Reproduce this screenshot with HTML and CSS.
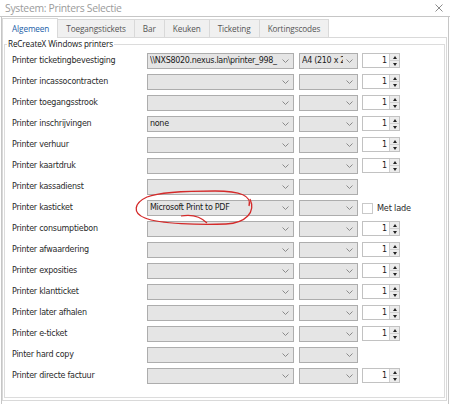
FILE: index.html
```html
<!DOCTYPE html>
<html>
<head>
<meta charset="utf-8">
<link rel="stylesheet" href="styles.css">
</head>
<body>
<div class="window">
  <div class="titlebar">
    <span class="title">Systeem: Printers Selectie</span>
    <svg class="close" width="8" height="8" viewBox="0 0 8 8"><path d="M0.5 0.5 L7.5 7.5 M7.5 0.5 L0.5 7.5" stroke="#8c8c8c" stroke-width="1" fill="none"/></svg>
  </div>
  <div class="client">
    <div class="tabs">
      <div class="tab active">Algemeen</div>
      <div class="tab">Toegangstickets</div>
      <div class="tab">Bar</div>
      <div class="tab">Keuken</div>
      <div class="tab">Ticketing</div>
      <div class="tab">Kortingscodes</div>
    </div>
    <div class="panel">
      <fieldset class="group">
        <legend>ReCreateX Windows printers</legend>
        <div class="rows">
          <div class="label">Printer ticketingbevestiging</div>
          <div class="combo"><span class="val">\\NXS8020.nexus.lan\printer_998_</span><svg class="chev" width="7" height="4" viewBox="0 0 7 4"><path d="M0.5 0.5 L3.5 3.5 L6.5 0.5" stroke="#8a8a8a" fill="none"/></svg></div>
          <div class="combo small"><span class="val">A4 (210 x 297 mm)</span><svg class="chev" width="7" height="4" viewBox="0 0 7 4"><path d="M0.5 0.5 L3.5 3.5 L6.5 0.5" stroke="#8a8a8a" fill="none"/></svg></div>
          <div class="spin"><span class="num">1</span><span class="btns"><span class="up"></span><span class="down"></span></span></div>

          <div class="label">Printer incassocontracten</div>
          <div class="combo"><span class="val"></span><svg class="chev" width="7" height="4" viewBox="0 0 7 4"><path d="M0.5 0.5 L3.5 3.5 L6.5 0.5" stroke="#8a8a8a" fill="none"/></svg></div>
          <div class="combo small"><span class="val"></span><svg class="chev" width="7" height="4" viewBox="0 0 7 4"><path d="M0.5 0.5 L3.5 3.5 L6.5 0.5" stroke="#8a8a8a" fill="none"/></svg></div>
          <div class="spin"><span class="num">1</span><span class="btns"><span class="up"></span><span class="down"></span></span></div>

          <div class="label">Printer toegangsstrook</div>
          <div class="combo"><span class="val"></span><svg class="chev" width="7" height="4" viewBox="0 0 7 4"><path d="M0.5 0.5 L3.5 3.5 L6.5 0.5" stroke="#8a8a8a" fill="none"/></svg></div>
          <div class="combo small"><span class="val"></span><svg class="chev" width="7" height="4" viewBox="0 0 7 4"><path d="M0.5 0.5 L3.5 3.5 L6.5 0.5" stroke="#8a8a8a" fill="none"/></svg></div>
          <div class="spin"><span class="num">1</span><span class="btns"><span class="up"></span><span class="down"></span></span></div>

          <div class="label">Printer inschrijvingen</div>
          <div class="combo"><span class="val">none</span><svg class="chev" width="7" height="4" viewBox="0 0 7 4"><path d="M0.5 0.5 L3.5 3.5 L6.5 0.5" stroke="#8a8a8a" fill="none"/></svg></div>
          <div class="combo small"><span class="val"></span><svg class="chev" width="7" height="4" viewBox="0 0 7 4"><path d="M0.5 0.5 L3.5 3.5 L6.5 0.5" stroke="#8a8a8a" fill="none"/></svg></div>
          <div class="spin"><span class="num">1</span><span class="btns"><span class="up"></span><span class="down"></span></span></div>

          <div class="label">Printer verhuur</div>
          <div class="combo"><span class="val"></span><svg class="chev" width="7" height="4" viewBox="0 0 7 4"><path d="M0.5 0.5 L3.5 3.5 L6.5 0.5" stroke="#8a8a8a" fill="none"/></svg></div>
          <div class="combo small"><span class="val"></span><svg class="chev" width="7" height="4" viewBox="0 0 7 4"><path d="M0.5 0.5 L3.5 3.5 L6.5 0.5" stroke="#8a8a8a" fill="none"/></svg></div>
          <div class="spin"><span class="num">1</span><span class="btns"><span class="up"></span><span class="down"></span></span></div>

          <div class="label">Printer kaartdruk</div>
          <div class="combo"><span class="val"></span><svg class="chev" width="7" height="4" viewBox="0 0 7 4"><path d="M0.5 0.5 L3.5 3.5 L6.5 0.5" stroke="#8a8a8a" fill="none"/></svg></div>
          <div class="combo small"><span class="val"></span><svg class="chev" width="7" height="4" viewBox="0 0 7 4"><path d="M0.5 0.5 L3.5 3.5 L6.5 0.5" stroke="#8a8a8a" fill="none"/></svg></div>
          <div class="spin"><span class="num">1</span><span class="btns"><span class="up"></span><span class="down"></span></span></div>

          <div class="label">Printer kassadienst</div>
          <div class="combo"><span class="val"></span><svg class="chev" width="7" height="4" viewBox="0 0 7 4"><path d="M0.5 0.5 L3.5 3.5 L6.5 0.5" stroke="#8a8a8a" fill="none"/></svg></div>
          <div class="combo small"><span class="val"></span><svg class="chev" width="7" height="4" viewBox="0 0 7 4"><path d="M0.5 0.5 L3.5 3.5 L6.5 0.5" stroke="#8a8a8a" fill="none"/></svg></div>
          <div class="empty"></div>

          <div class="label">Printer kasticket</div>
          <div class="combo"><span class="val">Microsoft Print to PDF</span><svg class="chev" width="7" height="4" viewBox="0 0 7 4"><path d="M0.5 0.5 L3.5 3.5 L6.5 0.5" stroke="#8a8a8a" fill="none"/></svg></div>
          <div class="combo small"><span class="val"></span><svg class="chev" width="7" height="4" viewBox="0 0 7 4"><path d="M0.5 0.5 L3.5 3.5 L6.5 0.5" stroke="#8a8a8a" fill="none"/></svg></div>
          <div class="check"><span class="box"></span><span class="cap">Met lade</span></div>

          <div class="label">Printer consumptiebon</div>
          <div class="combo"><span class="val"></span><svg class="chev" width="7" height="4" viewBox="0 0 7 4"><path d="M0.5 0.5 L3.5 3.5 L6.5 0.5" stroke="#8a8a8a" fill="none"/></svg></div>
          <div class="combo small"><span class="val"></span><svg class="chev" width="7" height="4" viewBox="0 0 7 4"><path d="M0.5 0.5 L3.5 3.5 L6.5 0.5" stroke="#8a8a8a" fill="none"/></svg></div>
          <div class="spin"><span class="num">1</span><span class="btns"><span class="up"></span><span class="down"></span></span></div>

          <div class="label">Printer afwaardering</div>
          <div class="combo"><span class="val"></span><svg class="chev" width="7" height="4" viewBox="0 0 7 4"><path d="M0.5 0.5 L3.5 3.5 L6.5 0.5" stroke="#8a8a8a" fill="none"/></svg></div>
          <div class="combo small"><span class="val"></span><svg class="chev" width="7" height="4" viewBox="0 0 7 4"><path d="M0.5 0.5 L3.5 3.5 L6.5 0.5" stroke="#8a8a8a" fill="none"/></svg></div>
          <div class="spin"><span class="num">1</span><span class="btns"><span class="up"></span><span class="down"></span></span></div>

          <div class="label">Printer exposities</div>
          <div class="combo"><span class="val"></span><svg class="chev" width="7" height="4" viewBox="0 0 7 4"><path d="M0.5 0.5 L3.5 3.5 L6.5 0.5" stroke="#8a8a8a" fill="none"/></svg></div>
          <div class="combo small"><span class="val"></span><svg class="chev" width="7" height="4" viewBox="0 0 7 4"><path d="M0.5 0.5 L3.5 3.5 L6.5 0.5" stroke="#8a8a8a" fill="none"/></svg></div>
          <div class="spin"><span class="num">1</span><span class="btns"><span class="up"></span><span class="down"></span></span></div>

          <div class="label">Printer klantticket</div>
          <div class="combo"><span class="val"></span><svg class="chev" width="7" height="4" viewBox="0 0 7 4"><path d="M0.5 0.5 L3.5 3.5 L6.5 0.5" stroke="#8a8a8a" fill="none"/></svg></div>
          <div class="combo small"><span class="val"></span><svg class="chev" width="7" height="4" viewBox="0 0 7 4"><path d="M0.5 0.5 L3.5 3.5 L6.5 0.5" stroke="#8a8a8a" fill="none"/></svg></div>
          <div class="spin"><span class="num">1</span><span class="btns"><span class="up"></span><span class="down"></span></span></div>

          <div class="label">Printer later afhalen</div>
          <div class="combo"><span class="val"></span><svg class="chev" width="7" height="4" viewBox="0 0 7 4"><path d="M0.5 0.5 L3.5 3.5 L6.5 0.5" stroke="#8a8a8a" fill="none"/></svg></div>
          <div class="combo small"><span class="val"></span><svg class="chev" width="7" height="4" viewBox="0 0 7 4"><path d="M0.5 0.5 L3.5 3.5 L6.5 0.5" stroke="#8a8a8a" fill="none"/></svg></div>
          <div class="spin"><span class="num">1</span><span class="btns"><span class="up"></span><span class="down"></span></span></div>

          <div class="label">Printer e-ticket</div>
          <div class="combo"><span class="val"></span><svg class="chev" width="7" height="4" viewBox="0 0 7 4"><path d="M0.5 0.5 L3.5 3.5 L6.5 0.5" stroke="#8a8a8a" fill="none"/></svg></div>
          <div class="combo small"><span class="val"></span><svg class="chev" width="7" height="4" viewBox="0 0 7 4"><path d="M0.5 0.5 L3.5 3.5 L6.5 0.5" stroke="#8a8a8a" fill="none"/></svg></div>
          <div class="spin"><span class="num">1</span><span class="btns"><span class="up"></span><span class="down"></span></span></div>

          <div class="label">Pinter hard copy</div>
          <div class="combo"><span class="val"></span><svg class="chev" width="7" height="4" viewBox="0 0 7 4"><path d="M0.5 0.5 L3.5 3.5 L6.5 0.5" stroke="#8a8a8a" fill="none"/></svg></div>
          <div class="combo small"><span class="val"></span><svg class="chev" width="7" height="4" viewBox="0 0 7 4"><path d="M0.5 0.5 L3.5 3.5 L6.5 0.5" stroke="#8a8a8a" fill="none"/></svg></div>
          <div class="empty"></div>

          <div class="label">Printer directe factuur</div>
          <div class="combo"><span class="val"></span><svg class="chev" width="7" height="4" viewBox="0 0 7 4"><path d="M0.5 0.5 L3.5 3.5 L6.5 0.5" stroke="#8a8a8a" fill="none"/></svg></div>
          <div class="combo small"><span class="val"></span><svg class="chev" width="7" height="4" viewBox="0 0 7 4"><path d="M0.5 0.5 L3.5 3.5 L6.5 0.5" stroke="#8a8a8a" fill="none"/></svg></div>
          <div class="spin"><span class="num">1</span><span class="btns"><span class="up"></span><span class="down"></span></span></div>
        </div>
      </fieldset>
    </div>
  </div>
  <svg class="annot" width="450" height="404" viewBox="0 0 450 404">
    <path d="M249 206 C252 196, 241 191, 215 191 C190 191, 160 192, 147 197 C134 203, 132 213, 145 218 C160 224, 200 225, 226 224 C246 223, 256 212, 250 199" stroke="#d42a2a" stroke-width="1.3" fill="none"/>
    <path d="M181 216 C192 214, 201 217, 207 223" stroke="#d42a2a" stroke-width="1.2" fill="none"/>
  </svg>
</div>
</body>
</html>
```
FILE: styles.css
```css
* { box-sizing: border-box; }
html, body { margin: 0; padding: 0; background: #fff; }
.window {
  position: relative;
  width: 450px;
  height: 404px;
  overflow: hidden;
  background: #fff;
}
.titlebar {
  height: 17px;
  border-bottom: 1px solid #c6c6c6;
  display: flex;
  align-items: center;
  justify-content: space-between;
  padding: 0 7px 0 5px;
}
.title {
  font-family: "Open Sans", "Noto Sans", sans-serif;
  font-size: 10.4px;
  letter-spacing: -0.3px;
  color: #9b9b9b;
  line-height: 16px;
}
.close { display: block; margin-top: -1px; }
.client {
  margin-left: 1px;
  width: 448px;
  height: 387px;
  border-left: 1px solid #c6c6c6;
  border-right: 1px solid #c6c6c6;
  padding-top: 1px;
}
.tabs {
  display: flex;
  height: 19px;
  align-items: flex-end;
  position: relative;
  z-index: 1;
}
.tab {
  height: 18px;
  padding: 0 8px;
  border: 1px solid #d9d9d9;
  border-bottom: none;
  border-left: none;
  background: #f0f0f0;
  font-family: "Open Sans", "Noto Sans", sans-serif;
  font-size: 8.2px;
  letter-spacing: -0.1px;
  line-height: 17px;
  color: #555;
  white-space: nowrap;
}
.tab:first-child { border-left: 1px solid #d9d9d9; }
.tab.active {
  height: 20px;
  margin-bottom: -1px;
  background: #fff;
  color: #1a5ea8;
  padding: 0 8px 0 9px;
  line-height: 19px;
}
.panel {
  width: 445px;
  border: 1px solid #d9d9d9;
  padding: 0 1px 2px 1px;
}
.group {
  margin: 0;
  border: 1px solid #dcdcdc;
  padding: 3px 0 13px 2px;
  min-width: 0;
}
.group legend {
  font-family: "Open Sans", "Noto Sans", sans-serif;
  font-size: 8.1px;
  line-height: 12px;
  padding: 0 1px;
  color: #111;
  letter-spacing: -0.1px;
}
.rows {
  display: grid;
  grid-template-columns: 135px 147px 59px 37px;
  column-gap: 5px;
  row-gap: 5px;
  grid-auto-rows: 16px;
}
.rows > .spin, .rows > .check, .rows > .empty { margin-left: -1px; }
.label {
  font-family: "DejaVu Sans", Verdana, sans-serif;
  font-size: 8px;
  letter-spacing: -0.25px;
  line-height: 16px;
  color: #2a2a2a;
  padding-left: 5px;
  white-space: nowrap;
}
.combo {
  display: flex;
  align-items: center;
  height: 16px;
  border: 1px solid #adadad;
  background: #e5e5e5;
  padding: 0 4px 0 2px;
  overflow: hidden;
}
.combo .val {
  flex: 1;
  min-width: 0;
  overflow: hidden;
  white-space: nowrap;
  font-family: "DejaVu Sans", Verdana, sans-serif;
  font-size: 8px;
  line-height: 14px;
  color: #1a1a1a;
  letter-spacing: -0.3px;
}
.combo .chev { flex: none; margin-left: 3px; }
.spin {
  display: flex;
  height: 15px;
  border: 1px solid #c2c2c2;
  background: #fff;
}
.spin .num {
  flex: 1;
  text-align: right;
  padding-right: 2px;
  font-family: "DejaVu Sans", Verdana, sans-serif;
  font-size: 8px;
  line-height: 13px;
  color: #1a1a1a;
}
.spin .btns {
  width: 10px;
  display: flex;
  flex-direction: column;
  border-left: 1px solid #d0d0d0;
  background: #ececec;
}
.spin .up, .spin .down {
  flex: 1;
  display: flex;
  align-items: center;
  justify-content: center;
}
.spin .up { border-bottom: 1px solid #d0d0d0; }
.spin .up::before {
  content: "";
  border-left: 2.5px solid transparent;
  border-right: 2.5px solid transparent;
  border-bottom: 3px solid #222;
}
.spin .down::before {
  content: "";
  border-left: 2.5px solid transparent;
  border-right: 2.5px solid transparent;
  border-top: 3px solid #222;
}
.check {
  display: flex;
  align-items: center;
  gap: 4px;
}
.check .box {
  flex: none;
  width: 11px;
  height: 11px;
  border: 1px solid #c9c9c9;
  background: #fff;
}
.check .cap {
  font-family: "DejaVu Sans", Verdana, sans-serif;
  font-size: 8.2px;
  letter-spacing: -0.2px;
  color: #2a2a2a;
  white-space: nowrap;
}
.annot {
  position: absolute;
  left: 0;
  top: 0;
  pointer-events: none;
}
```
